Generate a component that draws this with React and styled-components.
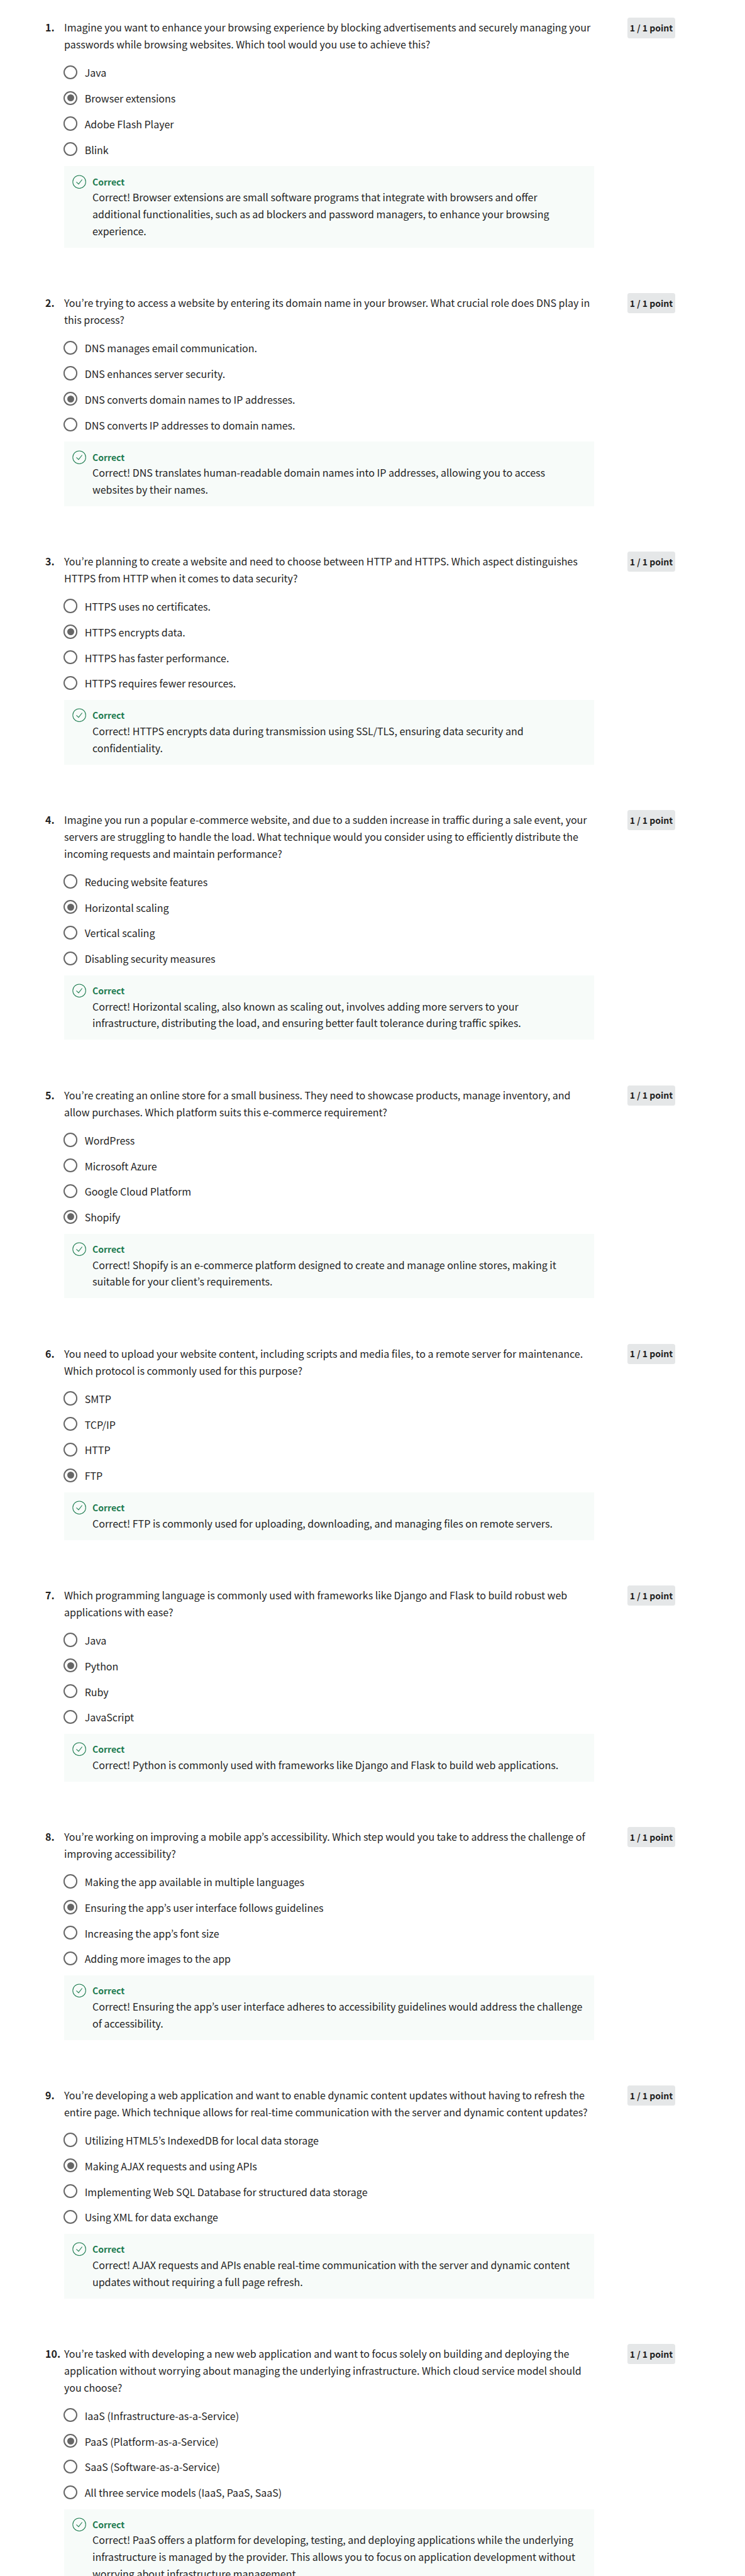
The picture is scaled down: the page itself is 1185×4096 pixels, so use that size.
import React from "react";
import styled, { createGlobalStyle } from "styled-components";

const u = (n) => `${(n * 0.8948).toFixed(3)}px`;

const GlobalStyle = createGlobalStyle`
  html, body { margin: 0; background: #fff; }
  body {
    font-family: "Noto Sans CJK KR", "Noto Sans", sans-serif;
    font-size: 16px;
    line-height: ${u(30)};
    color: #1f1f1f;
  }
`;

const Page = styled.main`
  width: 1185px;
  height: 4096px;
  box-sizing: border-box;
  overflow: hidden;
  padding: ${u(31.4)} 0 0 72px;
  background: #fff;
`;

const Question = styled.section`
  display: grid;
  grid-template-columns: 30px 843px 129px;
  padding-bottom: ${u(80.65)};
`;

const Number = styled.div`
  padding-top: ${u(2.5)};
  font-weight: 700;
  white-space: nowrap;
`;

const Body = styled.div``;

const Line = styled.div`
  height: ${u(30)};
  white-space: nowrap;
`;

const Prompt = styled.div`
  padding: ${u(2.5)} 0 ${u(11.7)};
`;

const Option = styled.label`
  display: flex;
  align-items: center;
  height: ${u(45.6)};
`;

const Radio = styled.span`
  flex: none;
  display: grid;
  place-items: center;
  box-sizing: border-box;
  width: ${u(25)};
  height: ${u(25)};
  margin: 0 ${u(12.5)} 0 ${u(-1)};
  border: 2px solid #666;
  border-radius: 50%;

  &::after {
    content: "";
    width: ${u(12.5)};
    height: ${u(12.5)};
    border-radius: 50%;
    background: ${(p) => (p.$checked ? "#666" : "transparent")};
  }
`;

const OptionText = styled.span`
  padding-top: ${u(2)};
  white-space: nowrap;
`;

const Feedback = styled.div`
  display: flex;
  box-sizing: border-box;
  margin-top: ${u(7.4)};
  padding: ${u(15)} 0 ${u(14.7)} ${u(15)};
  background: #f7fbf9;
`;

const CheckIcon = styled.svg`
  flex: none;
  width: ${u(25)};
  height: ${u(25)};
  margin-right: ${u(10.3)};
`;

const FeedbackTitle = styled.div`
  height: ${u(25)};
  line-height: ${u(25)};
  font-size: 14px;
  font-weight: 700;
  color: #1d7c50;
`;

const Points = styled.div`
  display: flex;
  align-items: center;
  justify-content: center;
  justify-self: end;
  width: 76px;
  height: ${u(36.4)};
  border-radius: ${u(4)};
  background: #e5e7e8;
  font-size: 14px;
  font-weight: 700;
  white-space: nowrap;
`;

const questions = [
  {
    prompt: [
      "Imagine you want to enhance your browsing experience by blocking advertisements and securely managing your",
      "passwords while browsing websites. Which tool would you use to achieve this?",
    ],
    options: ["Java", "Browser extensions", "Adobe Flash Player", "Blink"],
    selected: 1,
    feedback: [
      "Correct! Browser extensions are small software programs that integrate with browsers and offer",
      "additional functionalities, such as ad blockers and password managers, to enhance your browsing",
      "experience.",
    ],
  },
  {
    prompt: [
      "You’re trying to access a website by entering its domain name in your browser. What crucial role does DNS play in",
      "this process?",
    ],
    options: [
      "DNS manages email communication.",
      "DNS enhances server security.",
      "DNS converts domain names to IP addresses.",
      "DNS converts IP addresses to domain names.",
    ],
    selected: 2,
    feedback: [
      "Correct! DNS translates human-readable domain names into IP addresses, allowing you to access",
      "websites by their names.",
    ],
  },
  {
    prompt: [
      "You’re planning to create a website and need to choose between HTTP and HTTPS. Which aspect distinguishes",
      "HTTPS from HTTP when it comes to data security?",
    ],
    options: [
      "HTTPS uses no certificates.",
      "HTTPS encrypts data.",
      "HTTPS has faster performance.",
      "HTTPS requires fewer resources.",
    ],
    selected: 1,
    feedback: [
      "Correct! HTTPS encrypts data during transmission using SSL/TLS, ensuring data security and",
      "confidentiality.",
    ],
  },
  {
    prompt: [
      "Imagine you run a popular e-commerce website, and due to a sudden increase in traffic during a sale event, your",
      "servers are struggling to handle the load. What technique would you consider using to efficiently distribute the",
      "incoming requests and maintain performance?",
    ],
    options: [
      "Reducing website features",
      "Horizontal scaling",
      "Vertical scaling",
      "Disabling security measures",
    ],
    selected: 1,
    feedback: [
      "Correct! Horizontal scaling, also known as scaling out, involves adding more servers to your",
      "infrastructure, distributing the load, and ensuring better fault tolerance during traffic spikes.",
    ],
  },
  {
    prompt: [
      "You’re creating an online store for a small business. They need to showcase products, manage inventory, and",
      "allow purchases. Which platform suits this e-commerce requirement?",
    ],
    options: ["WordPress", "Microsoft Azure", "Google Cloud Platform", "Shopify"],
    selected: 3,
    feedback: [
      "Correct! Shopify is an e-commerce platform designed to create and manage online stores, making it",
      "suitable for your client’s requirements.",
    ],
  },
  {
    prompt: [
      "You need to upload your website content, including scripts and media files, to a remote server for maintenance.",
      "Which protocol is commonly used for this purpose?",
    ],
    options: ["SMTP", "TCP/IP", "HTTP", "FTP"],
    selected: 3,
    feedback: [
      "Correct! FTP is commonly used for uploading, downloading, and managing files on remote servers.",
    ],
  },
  {
    prompt: [
      "Which programming language is commonly used with frameworks like Django and Flask to build robust web",
      "applications with ease?",
    ],
    options: ["Java", "Python", "Ruby", "JavaScript"],
    selected: 1,
    feedback: [
      "Correct! Python is commonly used with frameworks like Django and Flask to build web applications.",
    ],
  },
  {
    prompt: [
      "You’re working on improving a mobile app’s accessibility. Which step would you take to address the challenge of",
      "improving accessibility?",
    ],
    options: [
      "Making the app available in multiple languages",
      "Ensuring the app’s user interface follows guidelines",
      "Increasing the app’s font size",
      "Adding more images to the app",
    ],
    selected: 1,
    feedback: [
      "Correct! Ensuring the app’s user interface adheres to accessibility guidelines would address the challenge",
      "of accessibility.",
    ],
  },
  {
    prompt: [
      "You’re developing a web application and want to enable dynamic content updates without having to refresh the",
      "entire page. Which technique allows for real-time communication with the server and dynamic content updates?",
    ],
    options: [
      "Utilizing HTML5’s IndexedDB for local data storage",
      "Making AJAX requests and using APIs",
      "Implementing Web SQL Database for structured data storage",
      "Using XML for data exchange",
    ],
    selected: 1,
    feedback: [
      "Correct! AJAX requests and APIs enable real-time communication with the server and dynamic content",
      "updates without requiring a full page refresh.",
    ],
  },
  {
    prompt: [
      "You’re tasked with developing a new web application and want to focus solely on building and deploying the",
      "application without worrying about managing the underlying infrastructure. Which cloud service model should",
      "you choose?",
    ],
    options: [
      "IaaS (Infrastructure-as-a-Service)",
      "PaaS (Platform-as-a-Service)",
      "SaaS (Software-as-a-Service)",
      "All three service models (IaaS, PaaS, SaaS)",
    ],
    selected: 1,
    feedback: [
      "Correct! PaaS offers a platform for developing, testing, and deploying applications while the underlying",
      "infrastructure is managed by the provider. This allows you to focus on application development without",
      "worrying about infrastructure management.",
    ],
  },
];

export default function App() {
  return (
    <Page>
      <GlobalStyle />
      {questions.map((q, i) => (
        <Question key={i}>
          <Number>{i + 1}.</Number>
          <Body>
            <Prompt>
              {q.prompt.map((t) => (
                <Line key={t}>{t}</Line>
              ))}
            </Prompt>
            {q.options.map((t, j) => (
              <Option key={t}>
                <Radio $checked={j === q.selected} />
                <OptionText>{t}</OptionText>
              </Option>
            ))}
            <Feedback>
              <CheckIcon viewBox="0 0 25 25" fill="none" stroke="#1d7c50" strokeWidth="1.15">
                <circle cx="12.4" cy="12.5" r="11.5" />
                <path d="M7.2 12.6 L11.2 16.4 L17.5 8.4" />
              </CheckIcon>
              <div>
                <FeedbackTitle>Correct</FeedbackTitle>
                {q.feedback.map((t) => (
                  <Line key={t}>{t}</Line>
                ))}
              </div>
            </Feedback>
          </Body>
          <Points>1 / 1 point</Points>
        </Question>
      ))}
    </Page>
  );
}
